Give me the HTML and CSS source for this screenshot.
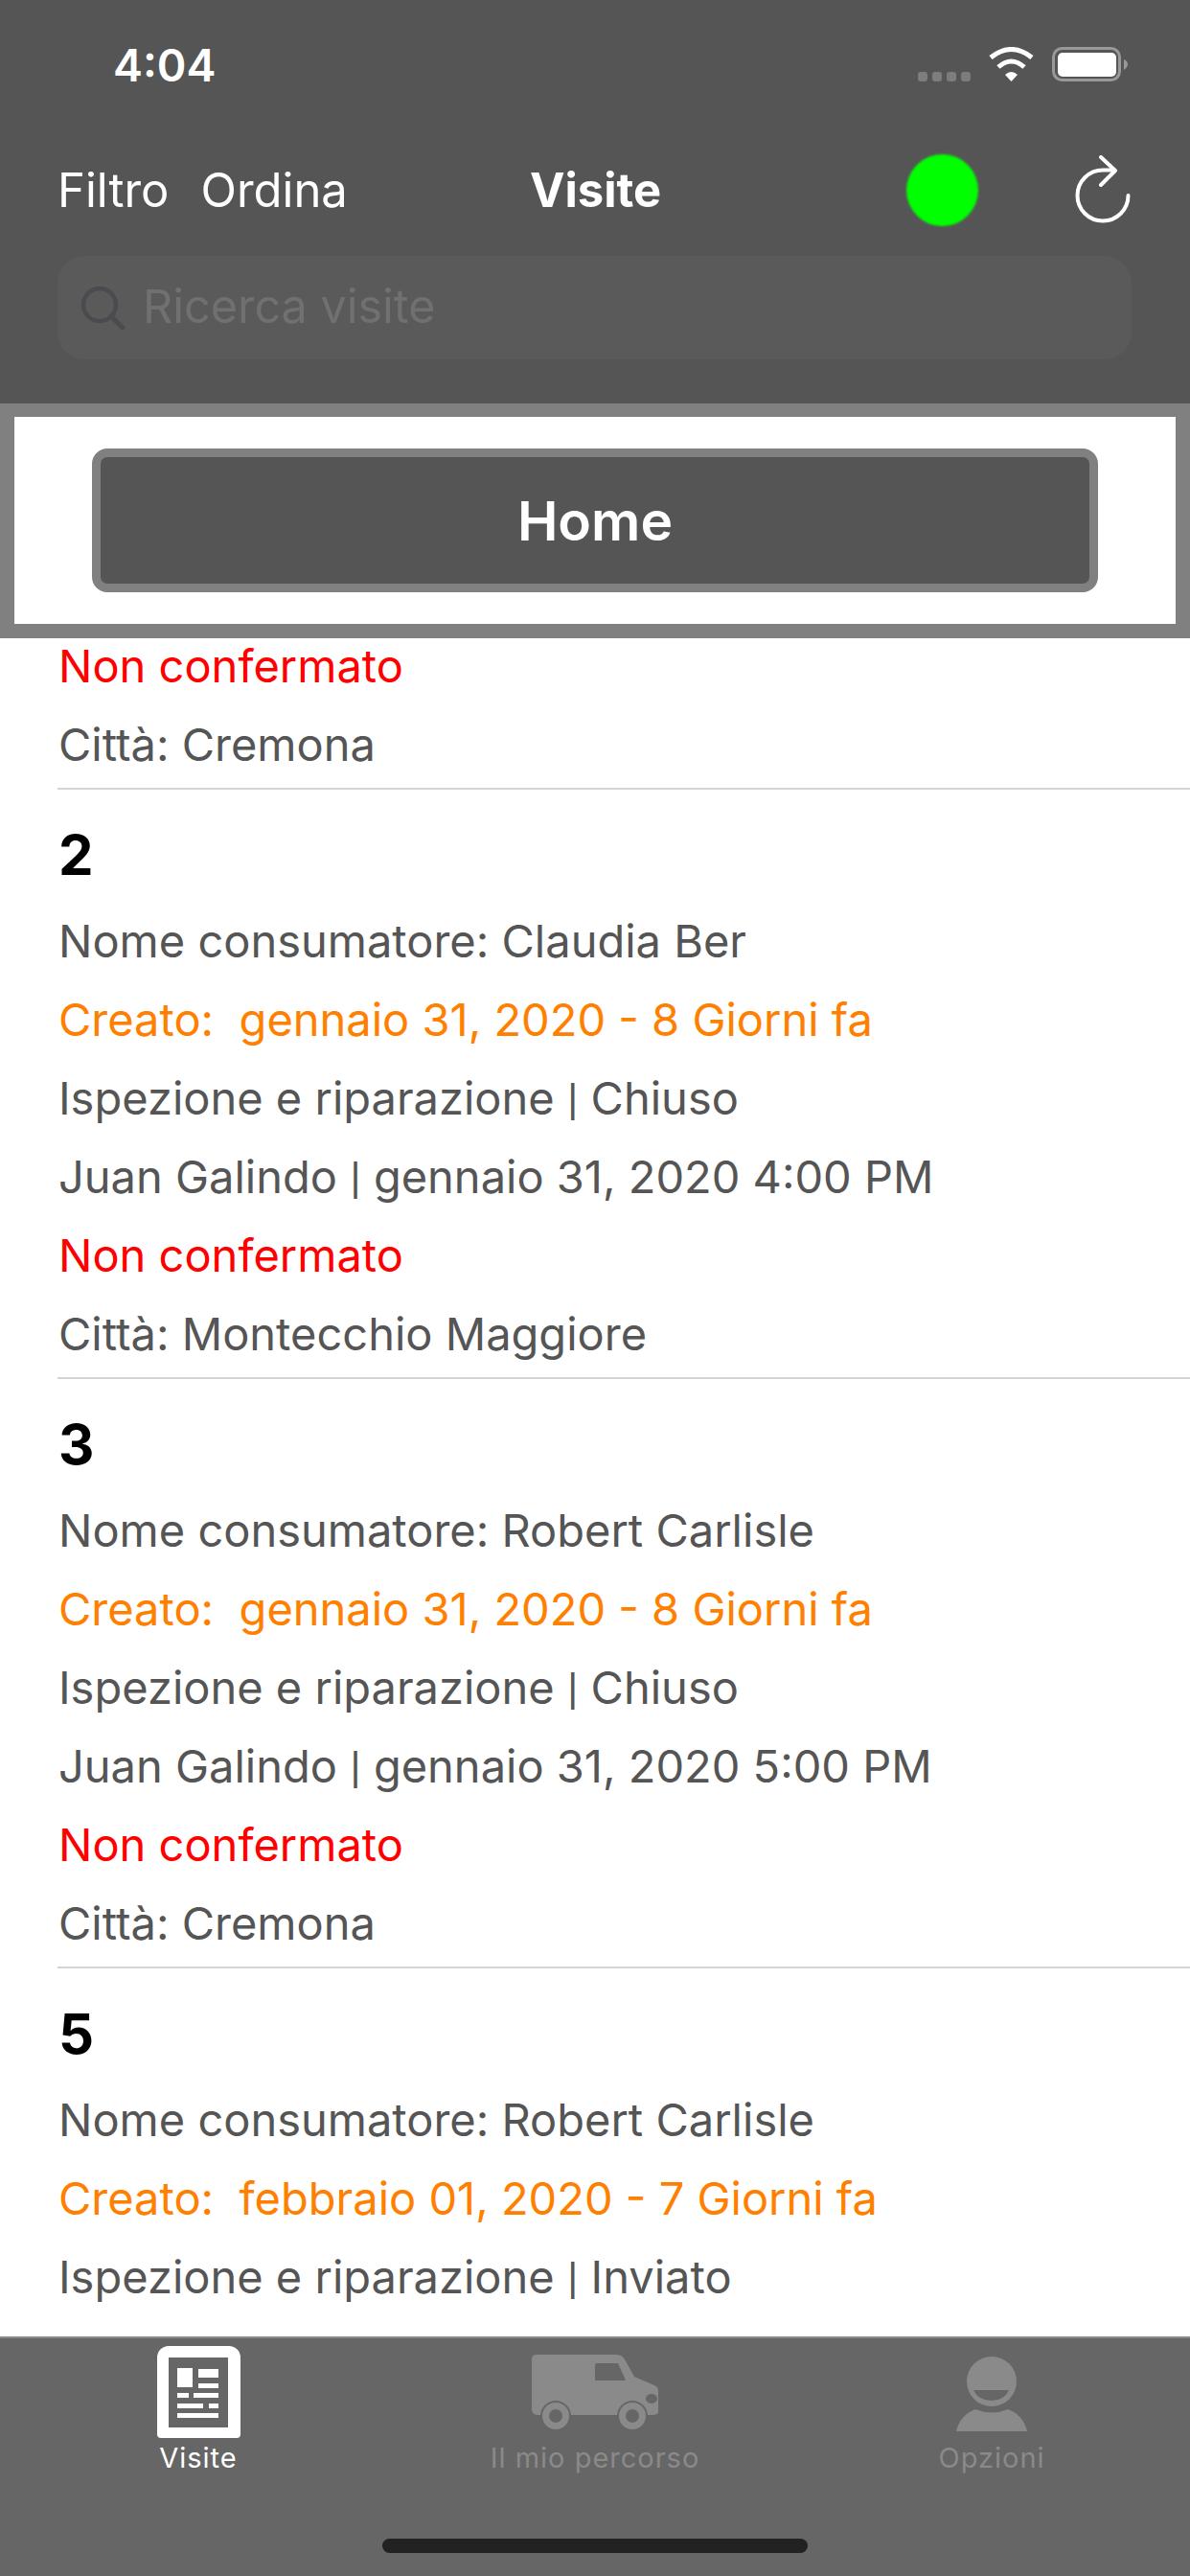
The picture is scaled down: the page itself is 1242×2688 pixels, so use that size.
FILE: index.html
```html
<!DOCTYPE html>
<html lang="it">
<head>
<meta charset="utf-8">
<title>Visite</title>
<link rel="stylesheet" href="styles.css">
</head>
<body>
<div class="app">
  <header class="header">
    <div class="status">
      <span class="time">4:04</span>
      <div class="status-icons">
        <div class="signal"><i></i><i></i><i></i><i></i></div>
        <svg class="wifi" viewBox="0 0 47 36" width="47" height="36"><path d="M2 11Q23.5-6 45 11" fill="none" stroke="#fff" stroke-width="5"/><path d="M10 21Q23.5 9 37 21" fill="none" stroke="#fff" stroke-width="5"/><path d="M17 29Q23.5 23 30 29L23.5 36Z" fill="#fff"/></svg>
        <svg class="battery" viewBox="0 0 79 36" width="79" height="36"><rect x="1.5" y="1.5" width="69" height="33" rx="9" fill="none" stroke="#999" stroke-width="3"/><rect x="6" y="6" width="61" height="25" rx="5" fill="#fff"/><path d="M75 13Q79 15 79 18Q79 21 75 24Z" fill="#999"/></svg>
      </div>
    </div>
    <nav class="nav">
      <div class="nav-left"><span>Filtro</span><span>Ordina</span></div>
      <div class="nav-title">Visite</div>
      <div class="nav-right">
        <span class="dot"></span>
        <svg class="refresh" viewBox="0 0 58 72" width="58" height="72"><path d="M55.500 42A26.500 26.500 0 1 1 29 15.500H41" fill="none" stroke="#fff" stroke-width="4" stroke-linecap="round"/><path d="M27 2L42 16L27 31" fill="none" stroke="#fff" stroke-width="4" stroke-linecap="round" stroke-linejoin="round"/></svg>
      </div>
    </nav>
    <div class="search">
      <svg class="search-icon" viewBox="0 0 47 47" width="47" height="47"><circle cx="20" cy="20" r="17" fill="none" stroke="#4b4b4f" stroke-width="4.500"/><path d="M32 32L44 44" stroke="#4b4b4f" stroke-width="5" stroke-linecap="round"/></svg>
      <span class="placeholder">Ricerca visite</span>
    </div>
  </header>

  <section class="band">
    <div class="band-inner">
      <button class="home">Home</button>
    </div>
  </section>

  <main class="list">
    <article class="row row-first">
      <p class="line red">Non confermato</p>
      <p class="line">Città: Cremona</p>
    </article>
    <article class="row">
      <h2 class="num">2</h2>
      <p class="line">Nome consumatore: Claudia Ber</p>
      <p class="line orange">Creato:  gennaio 31, 2020 - 8 Giorni fa</p>
      <p class="line">Ispezione e riparazione <span class="pipe">|</span> Chiuso</p>
      <p class="line">Juan Galindo <span class="pipe">|</span> gennaio 31, 2020 4:00 PM</p>
      <p class="line red">Non confermato</p>
      <p class="line">Città: Montecchio Maggiore</p>
    </article>
    <article class="row">
      <h2 class="num">3</h2>
      <p class="line">Nome consumatore: Robert Carlisle</p>
      <p class="line orange">Creato:  gennaio 31, 2020 - 8 Giorni fa</p>
      <p class="line">Ispezione e riparazione <span class="pipe">|</span> Chiuso</p>
      <p class="line">Juan Galindo <span class="pipe">|</span> gennaio 31, 2020 5:00 PM</p>
      <p class="line red">Non confermato</p>
      <p class="line">Città: Cremona</p>
    </article>
    <article class="row row-last">
      <h2 class="num">5</h2>
      <p class="line">Nome consumatore: Robert Carlisle</p>
      <p class="line orange">Creato:  febbraio 01, 2020 - 7 Giorni fa</p>
      <p class="line">Ispezione e riparazione <span class="pipe">|</span> Inviato</p>
    </article>
  </main>

  <footer class="tabbar">
    <div class="tab tab-active">
      <div class="tab-slot">
        <svg class="tab-icon icon-news" viewBox="0 0 87 96" width="87" height="96"><path d="M12 0H75A12 12 0 0 1 87 12V92A4 4 0 0 1 83 96H4A4 4 0 0 1 0 92V12A12 12 0 0 1 12 0Z" fill="#fff"/><rect x="12" y="12" width="62" height="73" fill="#666"/><g fill="#fff"><rect x="21" y="23" width="16" height="20"/><rect x="43" y="24" width="21" height="9"/><rect x="43" y="39" width="21" height="5"/><rect x="21" y="49" width="12" height="5"/><rect x="38" y="49" width="26" height="5"/><rect x="21" y="60" width="27" height="5"/><rect x="54" y="60" width="10" height="5"/><rect x="21" y="70" width="43" height="5"/></g></svg>
      </div>
      <span class="tab-label">Visite</span>
    </div>
    <div class="tab">
      <div class="tab-slot">
        <svg class="tab-icon icon-van" viewBox="0 0 132 78" width="132" height="78"><path d="M5 0H88Q94 0 97 5L107 23L128 32Q132 34 132 37V60Q132 63 125 63H5Q0 62 0 57V5Q0 0 5 0Z" fill="#8a8a8a"/><path d="M66 11Q66 9 68 9H90L98 27H66Z" fill="#666"/><ellipse cx="125" cy="46" rx="6" ry="5" fill="#666"/><circle cx="25" cy="64" r="16" fill="#666"/><circle cx="25" cy="64" r="14" fill="#8a8a8a"/><circle cx="25" cy="64" r="7" fill="#666"/><circle cx="105" cy="64" r="16" fill="#666"/><circle cx="105" cy="64" r="14" fill="#8a8a8a"/><circle cx="105" cy="64" r="7" fill="#666"/></svg>
      </div>
      <span class="tab-label">Il mio percorso</span>
    </div>
    <div class="tab">
      <div class="tab-slot">
        <svg class="tab-icon icon-person" viewBox="0 0 74 80" width="74" height="80"><circle cx="37" cy="27" r="26" fill="#8a8a8a"/><path d="M18 36H55Q50 47 37 47Q23 47 18 36Z" fill="#666"/><path d="M0 79Q4 62 20 56Q37 63 54 56Q70 62 74 79Z" fill="#8a8a8a"/></svg>
      </div>
      <span class="tab-label">Opzioni</span>
    </div>
    <span class="home-indicator"></span>
  </footer>
</div>
</body>
</html>
```
FILE: styles.css
```css
* { box-sizing: border-box; }
html, body { margin: 0; padding: 0; }
body { font-family: Inter, Roboto, "Liberation Sans", sans-serif; background: #fff; }
.app { width: 1242px; height: 2688px; display: flex; flex-direction: column; overflow: hidden; }

.header { background: #555; color: #fff; height: 421px; flex: none; }
.status { height: 136px; display: flex; justify-content: space-between; align-items: flex-start; padding: 49px 65px 0 118px; }
.time { font-size: 46.500px; font-weight: 600; line-height: 38px; }
.status-icons { display: flex; align-items: flex-start; }
.signal { display: flex; gap: 5px; margin-top: 26px; margin-right: 19px; }
.signal i { width: 10px; height: 10px; border-radius: 3px; background: #7d7d7d; }
.wifi { margin-right: 19px; }

.nav { height: 124px; margin-bottom: 7px; display: grid; grid-template-columns: 1fr auto 1fr; align-items: center; padding: 0 62px 0 60px; font-size: 49px; }
.nav-left { display: flex; gap: 33px; }
.nav-title { font-weight: 700; margin-left: 3px; }
.nav-right { display: flex; justify-content: flex-end; align-items: center; gap: 101px; }
.dot { width: 75px; height: 75px; border-radius: 50%; background: #0f0; filter: blur(1px); }

.search { margin: 0 61px 0 60px; height: 108px; border-radius: 28px; background: #5a5a5a; display: flex; align-items: center; padding-left: 24px; gap: 18px; }
.placeholder { font-size: 48.500px; line-height: 58px; margin-top: -2px; color: #707070; }

.band { flex: none; height: 245px; background: #808080; padding: 14px 15px 15px; position: relative; z-index: 1; }
.band-inner { height: 216px; background: #fff; padding: 33px 81px; }
.home { display: block; width: 100%; height: 150px; margin: 0; background: #555; border: 9px solid #808080; border-radius: 16px; color: #fff; font-family: inherit; font-size: 57px; font-weight: 600; }

.list { flex: 1; overflow: hidden; padding-left: 61px; }
.row { border-bottom: 2px solid #d4d4d4; padding-bottom: 4px; margin-left: -1px; padding-left: 1px; }
.row-first { margin-top: -12px; }
.row-last { border-bottom: 0; }
.num { margin: 0; height: 117px; padding-top: 10px; font-size: 58px; font-weight: 700; line-height: 117px; color: #000; }
.line { margin: 0; height: 82px; font-size: 47px; line-height: 82px; color: #555; white-space: pre; }
.pipe { font-family: Roboto, sans-serif; }
.red { color: #f00; }
.orange { color: #ff8000; }

.tabbar { flex: none; height: 250px; background: #666; border-top: 2px solid #8a8a8a; display: grid; grid-template-columns: repeat(3, 1fr); align-items: start; position: relative; }
.tab { display: flex; flex-direction: column; align-items: center; color: #8a8a8a; }
.tab-active { color: #fff; }
.tab-slot { height: 103px; }
.tab-icon { display: block; filter: blur(0.5px); }
.icon-news { margin-top: 8px; }
.icon-van { margin-top: 17px; }
.icon-person { margin-top: 18px; }
.tab-label { font-size: 29px; line-height: 44px; letter-spacing: 1px; }
.home-indicator { position: absolute; left: 399px; top: 209px; width: 444px; height: 15px; border-radius: 8px; background: #222; }
```
